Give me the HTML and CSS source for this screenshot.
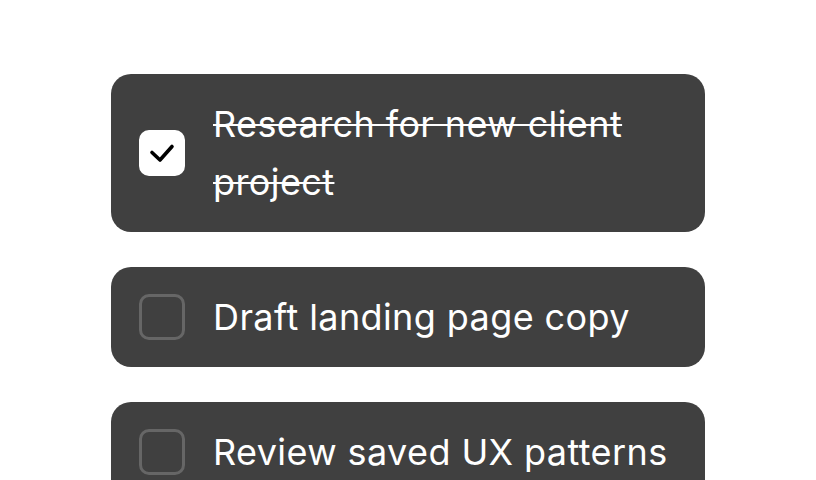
FILE: index.html
```html
<!DOCTYPE html>
<html lang="en">
<head>
  <meta charset="UTF-8">
  <meta name="viewport" content="width=device-width, initial-scale=1.0">
  <title>Todo</title>
  <link rel="stylesheet" href="styles.css">
</head>
<body>
  <ul class="todo_list">
    <li class="todo_item done">
      <span class="check">
        <svg viewBox="0 0 26 20" width="26" height="20"><path d="M3 9.5l8 7.5L23 3.5" fill="none" stroke="#000" stroke-width="3.6" stroke-linecap="round" stroke-linejoin="round"/></svg>
      </span>
      <span class="label">Research for new client project</span>
    </li>
    <li class="todo_item">
      <span class="check"></span>
      <span class="label">Draft landing page copy</span>
    </li>
    <li class="todo_item">
      <span class="check"></span>
      <span class="label">Review saved UX patterns</span>
    </li>
  </ul>
</body>
</html>
```

FILE: styles.css
```css
*{
  margin: 0;
  padding: 0;
  box-sizing: border-box;
}
body{
  background-color: #fff;
  font-family: Inter, "Liberation Sans", sans-serif;
}
.todo_list{
  width: 594px;
  margin: 74px auto 0;
  list-style-type: none;
  display: flex;
  flex-direction: column;
  gap: 35px;
}
.todo_item{
  display: flex;
  align-items: center;
  gap: 28px;
  padding: 21px 28px;
  background-color: #404040;
  border-radius: 20px;
  color: #fff;
}
.check{
  flex: none;
  width: 46px;
  height: 46px;
  border: 3px solid #666;
  border-radius: 10px;
  display: flex;
  align-items: center;
  justify-content: center;
}
.done .check{
  background-color: #fff;
  border-color: #fff;
}
.label{
  font-size: 36px;
  line-height: 58px;
  letter-spacing: 0.4px;
}
.done .label{
  text-decoration: line-through;
  text-decoration-thickness: 2px;
}
```
